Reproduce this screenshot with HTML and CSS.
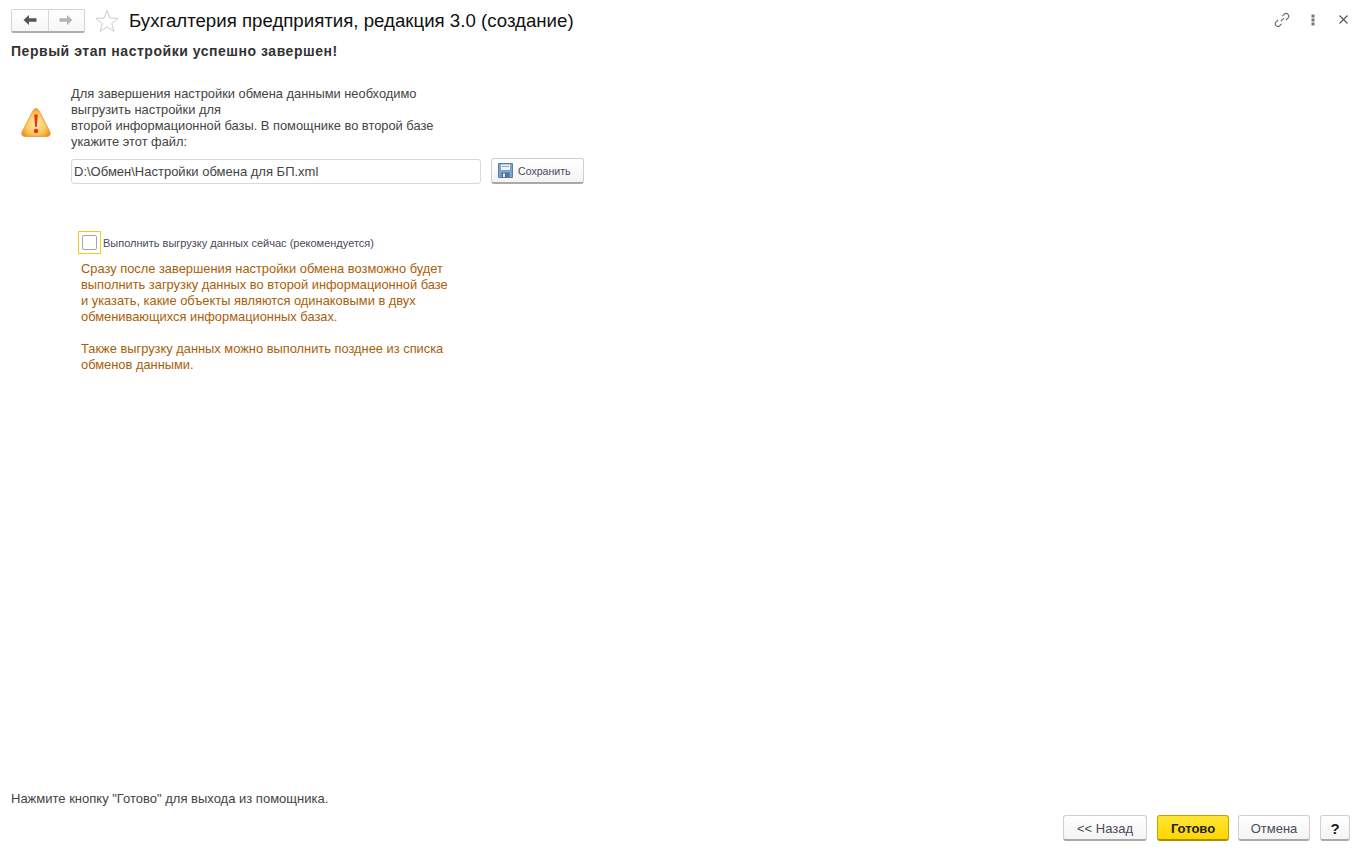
FILE: index.html
```html
<!DOCTYPE html>
<html lang="ru">
<head>
<meta charset="utf-8">
<title>Бухгалтерия предприятия, редакция 3.0 (создание)</title>
<link rel="stylesheet" href="styles.css">
</head>
<body>
<div class="page">
  <header class="header">
    <div class="nav-group">
      <button class="nav-btn nav-left" type="button" aria-label="Назад">
        <svg width="14" height="12" viewBox="0 0 14 12"><path d="M0.5 6 L6 1 V4.2 H13.5 V7.8 H6 V11 Z" fill="#555"/></svg>
      </button>
      <button class="nav-btn" type="button" aria-label="Вперёд">
        <svg width="14" height="12" viewBox="0 0 14 12"><path d="M13.5 6 L8 1 V4.2 H0.5 V7.8 H8 V11 Z" fill="#b4b4b4"/></svg>
      </button>
    </div>
    <svg class="star" width="24" height="24" viewBox="0 0 24 24"><path d="M12 1.5 L14.9 9 L23 9.4 L16.7 14.5 L18.9 22.4 L12 17.9 L5.1 22.4 L7.3 14.5 L1 9.4 L9.1 9 Z" fill="#fff" stroke="#c9cdd0" stroke-width="1"/></svg>
    <h1 class="title">Бухгалтерия предприятия, редакция 3.0 (создание)</h1>
    <div class="window-tools">
      <svg width="16" height="16" viewBox="0 0 16 16" fill="none" stroke="#6e6e6e" stroke-width="1.2"><path d="M6.8 9.2 L9.8 6.2"/><path d="M8.4 4.2 L10.2 2.4 C11.3 1.3 13 1.3 14 2.3 C15 3.4 15 5 13.9 6.1 L11.8 8.2"/><path d="M7.6 11.8 L5.8 13.6 C4.7 14.7 3 14.7 2 13.7 C1 12.6 1 11 2.1 9.9 L4.2 7.8"/></svg>
      <svg class="dots" width="4" height="12" viewBox="0 0 4 12" fill="#777"><rect x="0.5" y="0.5" width="3" height="3"/><rect x="0.5" y="4.5" width="3" height="3"/><rect x="0.5" y="8.5" width="3" height="3"/></svg>
      <svg width="9" height="9" viewBox="0 0 9 9" stroke="#555" stroke-width="1.1"><path d="M0.5 0.5 L8.5 8.5 M8.5 0.5 L0.5 8.5"/></svg>
    </div>
  </header>

  <main class="content">
    <h2 class="step-title">Первый этап настройки успешно завершен!</h2>

    <section class="save-block">
      <svg class="warning" width="32" height="32" viewBox="0 0 32 32">
        <defs>
          <radialGradient id="warn" cx="0.5" cy="0.55" r="0.6">
            <stop offset="0" stop-color="#ffe9a8"/>
            <stop offset="0.6" stop-color="#fcc65e"/>
            <stop offset="1" stop-color="#ee8f1c"/>
          </radialGradient>
        </defs>
        <path d="M16 1.5 C17.4 1.5 18.2 2.5 18.9 3.7 L29.8 24.6 C31 27 29.8 29.5 27 29.5 H5 C2.2 29.5 1 27 2.2 24.6 L13.1 3.7 C13.8 2.5 14.6 1.5 16 1.5 Z" fill="url(#warn)" stroke="#e8a24a" stroke-width="1"/>
        <path d="M14.2 7.5 H17.8 L16.8 20 H15.2 Z" fill="#e8301c"/>
        <circle cx="16" cy="24" r="2.2" fill="#e8301c"/>
      </svg>
      <div class="save-body">
        <p class="save-text">Для завершения настройки обмена данными необходимо<br>выгрузить настройки для<br>второй информационной базы. В помощнике во второй базе<br>укажите этот файл:</p>
        <div class="file-row">
          <input class="file-input" type="text" value="D:\Обмен\Настройки обмена для БП.xml">
          <button class="btn btn-save" type="button">
            <svg width="15" height="15" viewBox="0 0 15 15"><path d="M0.5 0.5 H14.5 V14.5 H0.5 Z" fill="#7ea2c8" stroke="#5b7fa3"/><rect x="3" y="1.5" width="9" height="5.5" fill="#eef3f8"/><rect x="4" y="3" width="7" height="1" fill="#8aa6c2"/><rect x="3.5" y="9.5" width="8" height="5" fill="#4f7397"/><rect x="5" y="10.5" width="2" height="3.5" fill="#dfe8f0"/></svg>
            Сохранить
          </button>
        </div>
      </div>
    </section>

    <section class="export-block">
      <label class="check-row">
        <span class="check-focus"><span class="check-box"></span></span>
        <span class="check-label">Выполнить выгрузку данных сейчас (рекомендуется)</span>
      </label>
      <p class="note">Сразу после завершения настройки обмена возможно будет<br>выполнить загрузку данных во второй информационной базе<br>и указать, какие объекты являются одинаковыми в двух<br>обменивающихся информационных базах.<br><br>Также выгрузку данных можно выполнить позднее из списка<br>обменов данными.</p>
    </section>
  </main>

  <footer class="footer">
    <p class="hint">Нажмите кнопку "Готово" для выхода из помощника.</p>
    <div class="actions">
      <button class="btn btn-back" type="button">&lt;&lt; Назад</button>
      <button class="btn btn-primary" type="button">Готово</button>
      <button class="btn btn-cancel" type="button">Отмена</button>
      <button class="btn btn-help" type="button">?</button>
    </div>
  </footer>
</div>
</body>
</html>
```
FILE: styles.css
```css
* { box-sizing: border-box; }
html, body { margin: 0; padding: 0; background: #fff; }
body { font-family: "Liberation Sans", Arial, sans-serif; color: #444; font-size: 12.87px; }
.page { width: 1369px; height: 853px; display: flex; flex-direction: column; overflow: hidden; }

.header { display: flex; align-items: center; height: 41px; padding: 0 21px 0 11px; }
.nav-group { display: flex; width: 74px; height: 24px; border: 1px solid #d4d4d4; border-bottom: 2px solid #aeaeae; border-radius: 2px; background: linear-gradient(#fff, #f6f6f6); margin-right: 10px; }
.nav-btn { flex: 1; padding: 0; border: 0; background: none; display: flex; align-items: center; justify-content: center; }
.nav-left { border-right: 1px solid #d8d8d8; }
.star { margin-right: 10px; flex: none; }
.title { margin: 0; font-size: 18.67px; font-weight: 400; color: #111; flex: 1; }
.window-tools { display: flex; align-items: center; margin-top: -2px; }
.dots { margin: 0 24px 0 21px; }

.content { flex: 1; padding: 2px 11px 0; }
.step-title { margin: 0; font-size: 14px; letter-spacing: 0.53px; line-height: 16px; font-weight: 700; color: #333; }

.save-block { display: flex; margin-top: 27px; }
.warning { flex: none; margin: 21px 19px 0 9px; }
.save-text { margin: 0; line-height: 16px; }
.file-row { display: flex; align-items: center; gap: 10px; margin-top: 8px; }
.file-input { width: 410px; height: 25px; padding: 0 2px; border: 1px solid #d9d9d9; border-radius: 3px; font: 13px "Liberation Sans", Arial, sans-serif; color: #444; background: #fff; }

.btn { font-family: "Liberation Sans", Arial, sans-serif; font-size: 13px; color: #4a4a5a; height: 26px; padding: 1px 0 0; border: 1px solid #d0d0d0; border-bottom: 2px solid #a9a9a9; border-radius: 3px; background: linear-gradient(#fff, #f4f4f4); }
.btn-save { width: 93px; display: flex; align-items: center; gap: 5px; padding: 0 0 0 6px; font-size: 10.6px; }

.export-block { margin-left: 67px; margin-top: 47px; }
.check-row { display: flex; align-items: center; }
.check-focus { width: 23px; height: 23px; border: 1px solid #f2c91c; display: flex; align-items: center; justify-content: center; margin-right: 2px; }
.check-box { width: 15px; height: 15px; border: 1px solid #a3a3a8; border-radius: 2px; background: #fff; }
.check-label { font-size: 11px; color: #4a4a5a; }
.note { margin: 7px 0 0 3px; line-height: 16px; color: #a8610a; }

.footer { padding: 0 19px 12px 11px; }
.hint { margin: 0 0 8px; line-height: 16px; font-size: 13px; }
.actions { display: flex; justify-content: flex-end; }
.btn-back { width: 84px; margin-right: 10px; }
.btn-primary { width: 72px; margin-right: 9px; font-weight: 700; color: #222; border: 1px solid #c2a600; border-bottom: 2px solid #a89000; background: linear-gradient(#ffe534, #ffd500); }
.btn-cancel { width: 72px; margin-right: 10px; }
.btn-help { width: 30px; font-weight: 700; font-size: 15px; color: #222; }
```
